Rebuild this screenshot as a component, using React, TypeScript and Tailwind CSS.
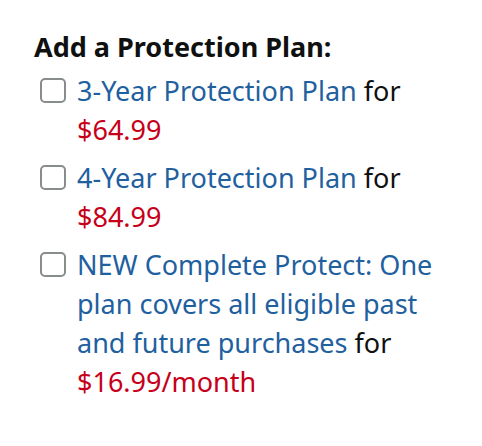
import React from "react";

type Plan = { title: string; price: string };

const plans: Plan[] = [
  { title: "3-Year Protection Plan", price: "$64.99" },
  { title: "4-Year Protection Plan", price: "$84.99" },
  {
    title: "NEW Complete Protect: One plan covers all eligible past and future purchases",
    price: "$16.99/month",
  },
];

function Box() {
  return (
    <span className="mt-[7px] h-[25px] w-[26px] shrink-0 rounded-[5px] border-2 border-[#888c8c] bg-white" />
  );
}

export default function App() {
  return (
    <div
      className="min-h-[446px] w-[482px] bg-white pl-[34px] pt-[27px] text-[#0f1111]"
      style={{ fontFamily: '"Noto Sans", Arial, sans-serif' }}
    >
      <h2 className="text-[27px] font-bold leading-[39px]">Add a Protection Plan:</h2>
      <div className="mt-[5px] flex w-[410px] flex-col gap-[9px]">
        {plans.map((p) => (
          <label key={p.price} className="flex gap-[11px] pl-[6px] text-[27px] leading-[39px]">
            <Box />
            <span>
              <a className="text-[#1f609f]">{p.title}</a> for
              <br />
              <span className="text-[#c6001a]">{p.price}</span>
            </span>
          </label>
        ))}
      </div>
    </div>
  );
}
